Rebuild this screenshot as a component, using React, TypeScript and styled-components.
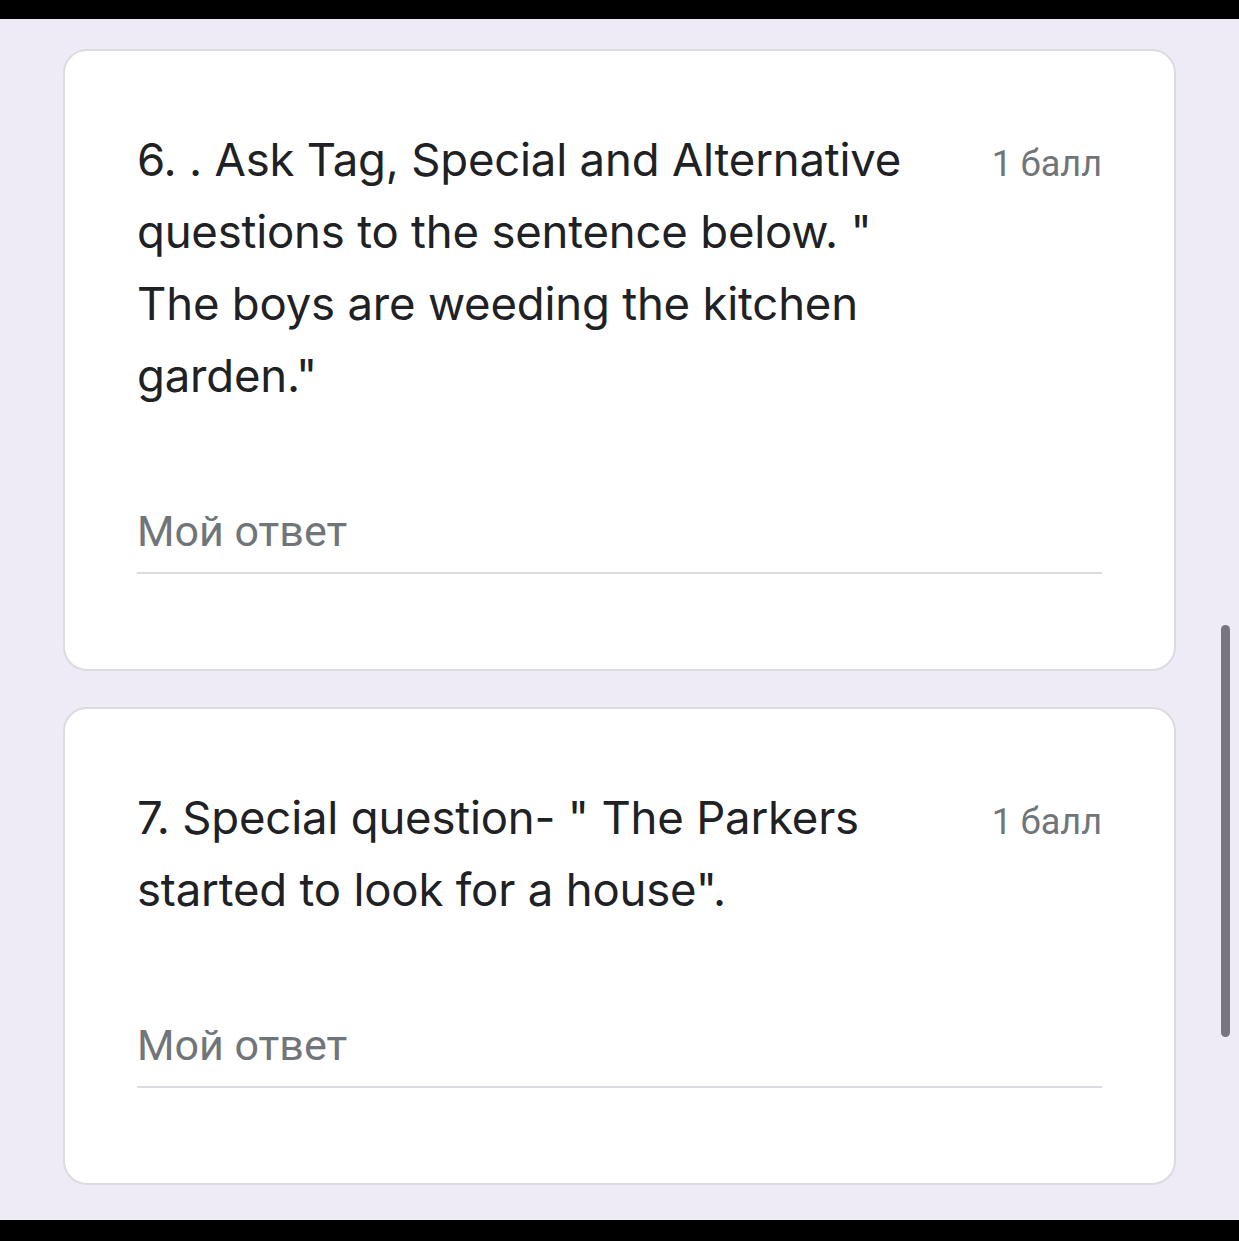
import styled, { createGlobalStyle } from "styled-components";

const GlobalStyle = createGlobalStyle`
  html, body {
    margin: 0;
    padding: 0;
    background: #000;
  }
  * {
    box-sizing: border-box;
  }
`;

const questions = [
  {
    title:
      '6. . Ask Tag, Special and Alternative questions to the sentence below. " The boys are weeding the kitchen garden."',
    points: "1 балл",
  },
  {
    title: '7. Special question- " The Parkers started to look for a house".',
    points: "1 балл",
  },
];

function App() {
  return (
    <>
      <GlobalStyle />
      <Screen>
        <StatusBar />
        <Page>
          {questions.map((q) => (
            <Card key={q.title}>
              <Header>
                <Title>{q.title}</Title>
                <Points>{q.points}</Points>
              </Header>
              <Answer placeholder="Мой ответ" />
            </Card>
          ))}
          <Scrollbar />
        </Page>
        <NavBar />
      </Screen>
    </>
  );
}

export default App;

const Screen = styled.div`
  width: 1239px;
  height: 1241px;
  display: flex;
  flex-direction: column;
  overflow: hidden;
`;

const StatusBar = styled.div`
  height: 19px;
  background: #000;
  flex-shrink: 0;
`;

const NavBar = styled.div`
  height: 21px;
  background: #000;
  flex-shrink: 0;
`;

const Page = styled.div`
  position: relative;
  flex: 1;
  background: #eeebf6;
  padding: 30px 63px 0;
  display: flex;
  flex-direction: column;
  gap: 36px;
`;

const Card = styled.div`
  background: #fff;
  border: 2px solid #dcdbe0;
  border-radius: 24px;
  padding: 73px 72px 95px;
  display: flex;
  flex-direction: column;
`;

const Header = styled.div`
  display: flex;
  align-items: baseline;
  gap: 56px;
`;

const Title = styled.div`
  flex: 1;
  font-family: Inter, "Liberation Sans", sans-serif;
  font-size: 45.5px;
  line-height: 72px;
  color: #202124;
  letter-spacing: -0.2px;
`;

const Points = styled.div`
  font-family: Roboto, "Liberation Sans", sans-serif;
  font-size: 36px;
  color: #70757a;
  white-space: nowrap;
`;

const Answer = styled.input`
  margin-top: 94px;
  border: none;
  border-bottom: 2px solid #dadce0;
  outline: none;
  padding: 0 0 16px;
  background: transparent;
  font-family: Roboto, "Liberation Sans", sans-serif;
  font-size: 43px;
  color: #202124;
  &::placeholder {
    color: #70757a;
  }
`;

const Scrollbar = styled.div`
  position: absolute;
  left: 1221px;
  top: 606px;
  width: 9px;
  height: 412px;
  border-radius: 5px;
  background: #79747e;
`;
